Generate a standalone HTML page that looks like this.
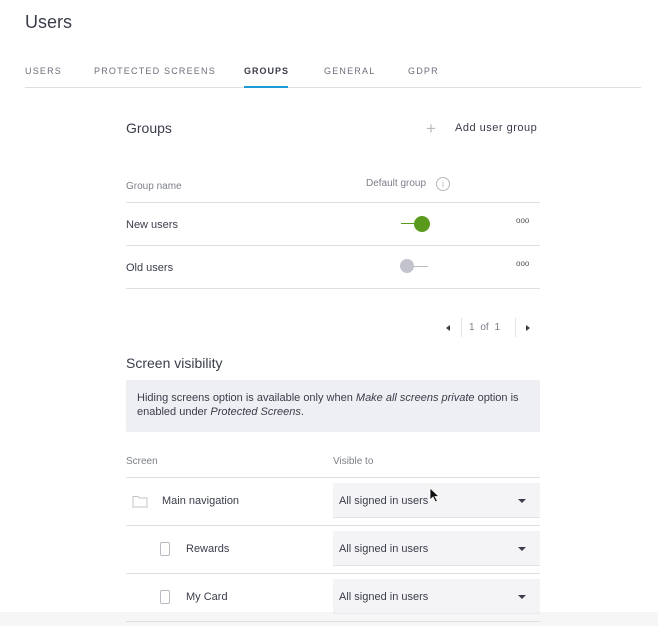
<!DOCTYPE html>
<html><head><meta charset="utf-8"><style>
*{margin:0;padding:0;box-sizing:border-box}
body{width:658px;height:626px;background:#fff;font-family:"Liberation Sans",sans-serif;color:#3a3d4a;position:relative;overflow:hidden}
.a{position:absolute;white-space:nowrap}
.tab{position:absolute;top:66px;font-size:9px;letter-spacing:1.2px;color:#6b6f7b}
.line{position:absolute;height:1px;background:#dedfe3}
.sel{position:absolute;left:333px;width:207px;height:35px;background:#f4f4f6;border-bottom:1px solid #e2e3e6}
.sel span{position:absolute;left:6px;top:12px;font-size:11px;color:#3a3d4a}
.sel i{position:absolute;right:14px;top:16px;border-left:4px solid transparent;border-right:4px solid transparent;border-top:4px solid #3a3d4a}
.dots{position:absolute;font-size:8px;color:#555}
.cb{position:absolute;width:10px;height:14px;border:1px solid #b9bbc2;border-radius:2px}
</style></head><body>
<div class="a" style="left:25px;top:12px;font-size:18px;color:#3a3d4a">Users</div>
<div class="tab" style="left:25px">USERS</div>
<div class="tab" style="left:94px">PROTECTED SCREENS</div>
<div class="tab" style="left:244px;color:#3a3d4a;font-weight:bold;letter-spacing:1px">GROUPS</div>
<div class="tab" style="left:324px">GENERAL</div>
<div class="tab" style="left:408px">GDPR</div>
<div class="line" style="left:25px;top:87px;width:616px"></div>
<div class="a" style="left:244px;top:86px;width:44px;height:2px;background:#1d9ad6"></div>

<div class="a" style="left:126px;top:120px;font-size:14px">Groups</div>
<div class="a" style="left:426px;top:119px;font-size:17px;color:#b8bac0;font-weight:200">+</div>
<div class="a" style="left:455px;top:122px;font-size:11px;letter-spacing:0.5px">Add user group</div>

<div class="a" style="left:126px;top:181px;font-size:10px;color:#7c7f89">Group name</div>
<div class="a" style="left:366px;top:178px;font-size:10px;color:#7c7f89">Default group</div>
<div class="a" style="left:436px;top:177px;width:14px;height:14px;border:1px solid #b5b7bd;border-radius:50%;font-size:9px;color:#b5b7bd;text-align:center;line-height:12px">i</div>
<div class="line" style="left:126px;top:202px;width:414px"></div>
<div class="a" style="left:126px;top:219px;font-size:11px">New users</div>
<div class="a" style="left:401px;top:223px;width:14px;height:1px;background:#5a9a1c"></div>
<div class="a" style="left:414px;top:216px;width:16px;height:16px;border-radius:50%;background:#5a9a1c"></div>
<div class="dots" style="left:516px;top:216px">ooo</div>
<div class="line" style="left:126px;top:245px;width:414px"></div>
<div class="a" style="left:126px;top:262px;font-size:11px">Old users</div>
<div class="a" style="left:412px;top:266px;width:16px;height:1px;background:#b8bac2"></div>
<div class="a" style="left:400px;top:259px;width:14px;height:14px;border-radius:50%;background:#c2c3cc"></div>
<div class="dots" style="left:516px;top:259px">ooo</div>
<div class="line" style="left:126px;top:288px;width:414px"></div>

<div class="a" style="left:446px;top:325px;border-top:3px solid transparent;border-bottom:3px solid transparent;border-right:4px solid #3a3d4a"></div>
<div class="a" style="left:461px;top:318px;width:1px;height:19px;background:#e2e3e6"></div>
<div class="a" style="left:469px;top:322px;font-size:10px;color:#7c7f89;word-spacing:3px">1 of 1</div>
<div class="a" style="left:515px;top:318px;width:1px;height:19px;background:#e2e3e6"></div>
<div class="a" style="left:526px;top:325px;border-top:3px solid transparent;border-bottom:3px solid transparent;border-left:4px solid #3a3d4a"></div>

<div class="a" style="left:126px;top:355px;font-size:14px">Screen visibility</div>
<div class="a" style="left:126px;top:380px;width:414px;height:52px;background:#eeeff3;border-radius:2px;padding:11px 11px;font-size:11px;line-height:14px;white-space:normal">Hiding screens option is available only when <i>Make all screens private</i> option is enabled under <i>Protected Screens</i>.</div>

<div class="a" style="left:126px;top:456px;font-size:10px;color:#7c7f89">Screen</div>
<div class="a" style="left:333px;top:456px;font-size:10px;color:#7c7f89">Visible to</div>
<div class="line" style="left:126px;top:477px;width:414px"></div>
<svg class="a" style="left:132px;top:494px" width="16" height="14" viewBox="0 0 16 14"><path d="M1 2.5h5l1.5 1.5H15v9H1z" fill="none" stroke="#c2c4ca"/></svg>
<div class="a" style="left:162px;top:495px;font-size:11px">Main navigation</div>
<div class="sel" style="top:483px"><span>All signed in users</span><i></i></div>
<svg class="a" style="left:429px;top:487px" width="11" height="16" viewBox="0 0 11 16"><path d="M1 1v12l3-3 2.5 5 2-1-2.5-4.5H10z" fill="#111" stroke="#fff" stroke-width="0.8"/></svg>
<div class="line" style="left:126px;top:525px;width:414px"></div>
<div class="cb" style="left:160px;top:542px"></div>
<div class="a" style="left:186px;top:543px;font-size:11px">Rewards</div>
<div class="sel" style="top:531px"><span>All signed in users</span><i></i></div>
<div class="line" style="left:126px;top:573px;width:414px"></div>
<div class="cb" style="left:160px;top:590px"></div>
<div class="a" style="left:186px;top:591px;font-size:11px">My Card</div>
<div class="sel" style="top:579px"><span>All signed in users</span><i></i></div>
<div class="a" style="left:0;top:612px;width:658px;height:14px;background:rgba(240,240,242,0.6)"></div>
<div class="line" style="left:126px;top:621px;width:414px"></div>
</body></html>
